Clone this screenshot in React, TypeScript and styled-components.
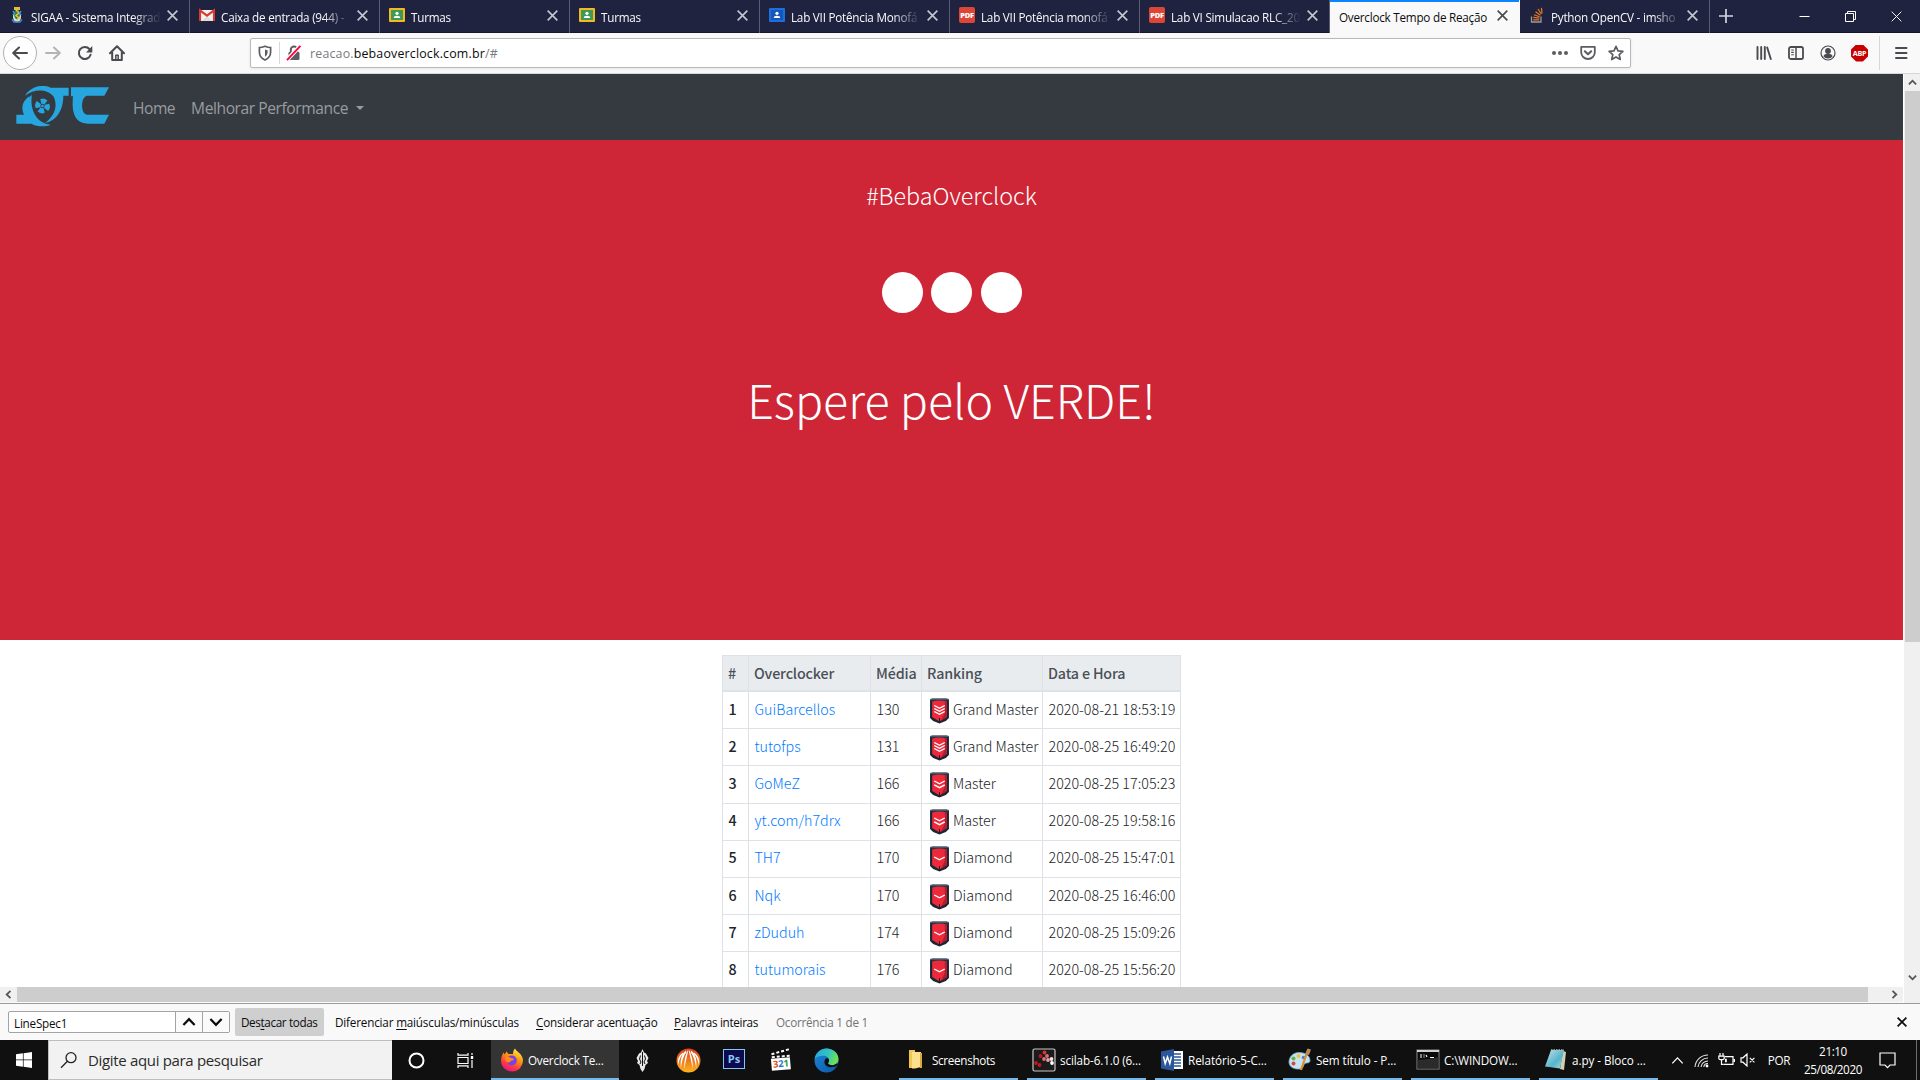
import React from "react";
import styled, { createGlobalStyle, css } from "styled-components";

const UI = '"Open Sans", "Noto Sans", sans-serif';
const PAGE = '"Noto Sans CJK SC", "Open Sans", sans-serif';

const Global = createGlobalStyle`
  *, *::before, *::after { box-sizing: border-box; }
  body { margin: 0; background: #fff; font-family: ${UI}; overflow: hidden; }
  svg { display: block; flex: none; }
`;

const Screen = styled.div`
  width: 1920px;
  height: 1080px;
  display: flex;
  flex-direction: column;
  overflow: hidden;
`;

const Label = styled.span<{ $size?: number; $ls?: number; $color?: string }>`
  font-size: ${p => p.$size ?? 11.7}px;
  letter-spacing: ${p => p.$ls ?? -0.22}px;
  color: ${p => p.$color ?? "inherit"};
  white-space: pre;
`;

/* ---------- tab strip ---------- */

const TabStrip = styled.div`
  height: 33px;
  flex: none;
  display: flex;
  background: #202340;
  box-shadow: inset 0 -1px 0 #14162b;
`;

const TabBox = styled.div<{ $active?: boolean }>`
  width: 190px;
  height: 33px;
  flex: none;
  display: flex;
  align-items: center;
  padding: 0 11px 3px 9px;
  gap: 6px;
  color: #f9f9fa;
  border-right: 1px solid #5b5d72;
  ${p => p.$active && css`
    background: #f9f9fa;
    color: #0c0c0d;
    border-right-color: #f9f9fa;
    box-shadow: inset 0 2px 0 #0a84ff;
  `}
`;

const TabTitle = styled.span<{ $fade?: boolean }>`
  flex: 1;
  min-width: 0;
  overflow: hidden;
  white-space: nowrap;
  font-size: 11.7px;
  letter-spacing: -0.23px;
  line-height: 18px;
  padding-top: 3px;
  ${p => p.$fade && css`mask-image: linear-gradient(to left, transparent 0, #000 28px);`}
`;

const TabTools = styled.div`
  flex: 1;
  display: flex;
  align-items: center;
  justify-content: space-between;
  padding: 0 18px 1px 9px;
  color: #f9f9fa;
`;

const WindowButtons = styled.div`
  display: flex;
  gap: 35px;
`;

/* ---------- toolbar ---------- */

const Toolbar = styled.div`
  height: 41px;
  flex: none;
  display: flex;
  align-items: center;
  background: #f9f9fa;
  border-bottom: 1px solid #d7d7db;
  color: #4a4a4f;
`;

const NavButtons = styled.div`
  width: 250px;
  flex: none;
  display: flex;
  align-items: center;
  gap: 16px;
  padding-left: 3px;
`;

const BackCircle = styled.div`
  width: 34px;
  height: 34px;
  margin-right: -8px;
  border: 1px solid #b1b1b3;
  border-radius: 50%;
  background: #fff;
  display: flex;
  align-items: center;
  justify-content: center;
`;

const UrlBar = styled.div`
  width: 1381px;
  height: 30px;
  flex: none;
  display: flex;
  align-items: center;
  padding: 0 6px;
  background: #fff;
  border: 1px solid #b8b8bb;
  border-radius: 2px;
  box-shadow: 0 1px 3px rgba(0, 0, 0, 0.08);
`;

const UrlDivider = styled.i`
  width: 1px;
  height: 22px;
  margin: 0 6px;
  background: #d7d7db;
`;

const UrlText = styled.span`
  flex: 1;
  margin-left: 8px;
  padding-top: 1px;
  font-size: 12.4px;
  letter-spacing: 0.18px;
  color: #7b7b80;
  b { font-weight: 400; color: #0c0c0d; }
`;

const UrlActions = styled.div`
  display: flex;
  gap: 12px;
`;

const ToolbarRight = styled.div`
  flex: 1;
  display: flex;
  align-items: center;
  justify-content: flex-end;
  gap: 16px;
  padding-right: 11px;
`;

const ToolDivider = styled.i`
  width: 1px;
  height: 34px;
  margin: 0 -3px 0 -5px;
  background: #d7d7db;
`;

/* ---------- page ---------- */

const Viewport = styled.div`
  height: 929px;
  flex: none;
  display: grid;
  grid-template-columns: 1903px 17px;
  grid-template-rows: 913px 16px;
  background: #f0f0f0;
`;

const Page = styled.main`
  overflow: hidden;
  background: #fff;
  font-family: ${PAGE};
`;

const Navbar = styled.nav`
  height: 66px;
  display: flex;
  align-items: center;
  padding: 0 16px;
  background: #343a40;
  color: #999c9f;
  font-family: ${UI};
`;

const Brand = styled.a`
  margin-right: 23px;
`;

const NavLink = styled.a<{ $ls: number }>`
  display: flex;
  align-items: center;
  gap: 8px;
  margin-right: 16px;
  padding-top: 2px;
  font-size: 15.6px;
  letter-spacing: ${p => p.$ls}px;
  white-space: nowrap;
`;

const Caret = styled.i`
  border: 4px solid transparent;
  border-top-color: currentColor;
  border-bottom: 0;
`;

const Hero = styled.section`
  height: 500px;
  display: flex;
  flex-direction: column;
  align-items: center;
  background: #ce2636;
  color: #fff;
  font-weight: 300;
`;

const HashTag = styled.p`
  margin: 38px 0 0;
  font-size: 23.3px;
  line-height: 34px;
`;

const Dots = styled.div`
  display: flex;
  gap: 8.500px;
  margin-top: 59.500px;
`;

const Dot = styled.i`
  width: 41px;
  height: 41px;
  border-radius: 50%;
  background: #fff;
`;

const Headline = styled.h1`
  margin: 52px 0 0;
  font-size: 46.600px;
  line-height: 68px;
  font-weight: 300;
`;

const Table = styled.div`
  width: 459px;
  margin: 15px 0 0 722px;
  border-left: 1px solid #dee2e6;
  border-top: 1px solid #dee2e6;
`;

const TableRow = styled.div<{ $head?: boolean }>`
  display: grid;
  grid-template-columns: 26px 122px 51px 121px 138px;
  height: ${p => (p.$head ? 36 : 37.2)}px;
  ${p => p.$head && css`background: #e9ecef; color: #495057;`}
`;

const Cell = styled.div<{ $head?: boolean; $bold?: boolean }>`
  display: flex;
  align-items: center;
  padding: ${p => (p.$head ? "0 0 1px 5px" : "0 0 4px 5.500px")};
  border-right: 1px solid #dee2e6;
  border-bottom: ${p => (p.$head ? 2 : 1)}px solid #dee2e6;
  font-size: 14.3px;
  font-weight: ${p => (p.$head || p.$bold ? 500 : 300)};
  letter-spacing: ${p => (p.$head ? -0.16 : 0)}px;
  color: ${p => (p.$head ? "#495057" : "#212529")};
  white-space: nowrap;
`;

const Player = styled.a`
  color: #007bff;
`;

const BadgeWrap = styled.span`
  margin: 5px 3px 0 1.500px;
`;

/* ---------- scrollbars ---------- */

const VScroll = styled.div`
  grid-row: 1 / 3;
  grid-column: 2;
  display: flex;
  flex-direction: column;
  align-items: center;
  justify-content: space-between;
  padding-bottom: 17px;
  background: #f0f0f0;
  border-left: 1px solid #fff;
`;

const VThumb = styled.div`
  width: 15px;
  height: 551px;
  margin-bottom: auto;
  background: #cdcdcd;
`;

const HScroll = styled.div`
  display: flex;
  align-items: center;
  height: 16px;
  background: #f0f0f0;
  border-bottom: 1px solid #fafafa;
`;

const HThumb = styled.div`
  width: 1851px;
  height: 15px;
  margin-right: 18px;
  background: #cdcdcd;
`;

const ArrowBox = styled.div`
  width: 17px;
  height: 17px;
  flex: none;
  display: flex;
  align-items: center;
  justify-content: center;
`;

/* ---------- find bar ---------- */

const FindBar = styled.div`
  height: 37px;
  flex: none;
  display: flex;
  align-items: center;
  padding: 0 13px 1px 8px;
  background: #f9f9fa;
  border-top: 1px solid #9c9c9e;
  color: #0c0c0d;
`;

const FindField = styled.div`
  display: flex;
  width: 222px;
  height: 22px;
  flex: none;
  border: 1px solid #a3a3a5;
  border-radius: 2px;
  background: #fff;
`;

const FindInput = styled.div`
  width: 166px;
  padding-left: 5px;
  line-height: 20px;
`;

const FindStep = styled.div`
  flex: 1;
  display: flex;
  align-items: center;
  justify-content: center;
  border-left: 1px solid #a3a3a5;
  background: #fbfbfb;
`;

const FindToggle = styled.div<{ $on?: boolean; $w: number }>`
  height: 28px;
  width: ${p => p.$w}px;
  flex: none;
  margin-left: 5px;
  padding-left: 6px;
  line-height: 26px;
  border-radius: 2px;
  background: ${p => (p.$on ? "#cfcfd0" : "transparent")};
  u { text-underline-offset: 2px; }
`;

const FindClose = styled.span`
  margin-left: auto;
`;

/* ---------- taskbar ---------- */

const Taskbar = styled.div`
  height: 40px;
  flex: none;
  display: flex;
  background: #101010;
  color: #fff;
`;

const TaskIcon = styled.div<{ $w: number }>`
  width: ${p => p.$w}px;
  flex: none;
  display: flex;
  align-items: center;
  justify-content: center;
`;

const SearchBox = styled.div`
  width: 344px;
  flex: none;
  display: flex;
  align-items: center;
  gap: 10px;
  padding-left: 11px;
  background: #f2f2f2;
  border: 1px solid #bdbdbd;
  border-right: 0;
  color: #2b2b2b;
`;

const TaskButton = styled.div<{ $active?: boolean }>`
  width: 128px;
  height: 40px;
  flex: none;
  display: flex;
  align-items: center;
  gap: 4px;
  padding: 0 0 1px 9px;
  background: ${p =>
    p.$active
      ? "linear-gradient(#76b9ed, #76b9ed) 0 100% / 128px 2px no-repeat, #343434"
      : "linear-gradient(#76b9ed, #76b9ed) 4px 100% / 119px 2px no-repeat"};
`;

const Pinned = styled.div`
  display: flex;
  width: 276px;
  flex: none;
`;

const Tray = styled.div`
  flex: 1;
  display: flex;
  align-items: center;
  padding-left: 5px;
`;

const TrayItem = styled.div<{ $w: number }>`
  width: ${p => p.$w}px;
  flex: none;
  display: flex;
  flex-direction: column;
  align-items: center;
`;

const Clock = styled(TrayItem)`
  line-height: 18px;
  padding-bottom: 1px;
`;

const ShowDesktop = styled.div`
  width: 4px;
  height: 40px;
  margin-left: auto;
  border-left: 1px solid #6e6e6e;
`;

/* ---------- icons ---------- */

const Cross = ({ s = 10, w = 1.6, c = "currentColor" }: { s?: number; w?: number; c?: string }) => (
  <svg width={s} height={s} viewBox="0 0 10 10" stroke={c} strokeWidth={w}><path d="M.6.6l8.8 8.8M9.4.6L.6 9.4" /></svg>
);

const Chevron = ({ r = 0, s = 9, w = 2, c = "#555" }: { r?: number; s?: number; w?: number; c?: string }) => (
  <svg width={s} height={s} viewBox="0 0 10 10" fill="none" stroke={c} strokeWidth={w}>
    <path d="M1 7.2L5 3l4 4.2" transform={`rotate(${r} 5 5)`} />
  </svg>
);

const Crest = () => (
  <svg width="16" height="18" viewBox="0 0 16 18">
    <path d="M4 8h8v3q0 4-4 5.500Q4 15 4 11z" fill="#d8dcd8" />
    <path d="M5 1h6v3H5z" fill="#e6b93a" /><path d="M6 4h4v3l1 2-1 3-2 2-2-2-1-3 1-2z" fill="#2f7a4c" />
    <path d="M7 4l3 3-3 2.500L10 12l-3 2" stroke="#f0c63c" strokeWidth="1.400" fill="none" />
    <path d="M4 5l1.500 2L4 9M12 5l-1.500 2L12 9" stroke="#3fa0e0" strokeWidth="1.400" fill="none" />
    <path d="M3 13.500l2 2.500h6l2-2.500" stroke="#3a8bd0" strokeWidth="1.400" fill="none" />
  </svg>
);

const Gmail = () => (
  <svg width="16" height="16" viewBox="0 0 16 16">
    <path d="M1 3h14v11H1z" fill="#f2f2f2" /><path d="M3 14l5-5 5 5z" fill="#ddd" />
    <path d="M1 14V3.4l7 5.2 7-5.2V14" fill="none" stroke="#d93a2e" strokeWidth="2.2" />
  </svg>
);

const Classroom = ({ frame, board }: { frame: string; board: string }) => (
  <svg width="16" height="16" viewBox="0 0 16 16">
    <rect y="1" width="16" height="14" rx="1" fill={frame} /><rect x="2" y="3" width="12" height="10" fill={board} />
    <circle cx="8" cy="6.3" r="1.6" fill="#fff" /><path d="M4.8 11q0-2.2 3.2-2.2T11.2 11z" fill="#fff" />
  </svg>
);

const PdfBox = styled.span`
  width: 16px;
  height: 16px;
  flex: none;
  border-radius: 2px;
  background: #dd4537;
  color: #fff;
  font: 800 7.5px/16px "Open Sans", sans-serif;
  letter-spacing: -0.3px;
  text-align: center;
`;

const StackOverflow = () => (
  <svg width="16" height="16" viewBox="0 0 16 16" fill="none">
    <path d="M2.5 9.5v5.5h9.5V9.5" stroke="#9b9b9b" strokeWidth="1.3" />
    <path d="M4.2 12.8h6.1M4.3 10.4l6 .7M5 7.8l5.6 1.9M6.6 4.8l4.8 3.5M9 2l3.3 5M12.4.8l.7 5.5" stroke="#e87922" strokeWidth="1.2" />
  </svg>
);

const Arrow = ({ c, flip }: { c: string; flip?: boolean }) => (
  <svg width="16" height="16" viewBox="0 0 16 16" fill="none" stroke={c} strokeWidth="2" strokeLinecap="round" strokeLinejoin="round">
    <path d={flip ? "M1 8h13.5M9 2.5L14.8 8 9 13.5" : "M15 8H1.5M7 2.5L1.2 8 7 13.5"} />
  </svg>
);

const Reload = () => (
  <svg width="16" height="16" viewBox="0 0 16 16" fill="none" stroke="#4a4a4f" strokeWidth="2">
    <path d="M13.6 9.8A6 6 0 1 1 12.4 4" strokeLinecap="round" /><path d="M15.3 1v6.4H9z" fill="#4a4a4f" stroke="none" />
  </svg>
);

const Home = () => (
  <svg width="16" height="16" viewBox="0 0 16 16" fill="none" stroke="#4a4a4f" strokeWidth="2" strokeLinejoin="round" strokeLinecap="round">
    <path d="M1 8.3L8 1.3l7 7M3.2 7.5V15h9.6V7.5" /><path d="M6.8 14.5v-4.2h2.4v4.2" strokeWidth="1.5" />
  </svg>
);

const Shield = () => (
  <svg width="16" height="16" viewBox="0 0 16 16" fill="none" stroke="#5c5c61" strokeWidth="1.7">
    <path d="M8 1.2q3 1.2 5.6 1.3v4.7Q13.4 12.8 8 15 2.6 12.8 2.4 7.2V2.5Q5 2.4 8 1.2z" />
    <path d="M8 4.4q1.6.7 2.6.8v2.3q0 2.6-2.6 4.2z" fill="#5c5c61" stroke="none" />
  </svg>
);

const BrokenLock = () => (
  <svg width="16" height="16" viewBox="0 0 16 16" fill="none">
    <rect x="2.5" y="7" width="11" height="8" rx="1.2" fill="#5c5c61" />
    <path d="M4.8 7.5V4.7a3.2 3.2 0 0 1 6.4 0v2.8" stroke="#5c5c61" strokeWidth="2" />
    <path d="M.8 15.2L14.2.8" stroke="#fff" strokeWidth="4" /><path d="M1 15.2L14.4.8" stroke="#ff0039" strokeWidth="1.9" />
  </svg>
);

const Dots3 = () => (
  <svg width="16" height="16" viewBox="0 0 16 16" fill="#5c5c61"><circle cx="2" cy="8" r="2" /><circle cx="8" cy="8" r="2" /><circle cx="14" cy="8" r="2" /></svg>
);

const Pocket = () => (
  <svg width="16" height="16" viewBox="0 0 16 16" fill="none" stroke="#5c5c61" strokeWidth="1.8" strokeLinejoin="round" strokeLinecap="round">
    <path d="M1.2 1.8h13.6v5.4a6.8 6.8 0 0 1-13.6 0z" /><path d="M4.8 6.2L8 9.3l3.2-3.1" strokeWidth="2" />
  </svg>
);

const Star = () => (
  <svg width="16" height="16" viewBox="0 0 16 16" fill="none" stroke="#5c5c61" strokeWidth="1.7" strokeLinejoin="round">
    <path d="M8 1.3l2 4.5 4.9.5-3.7 3.3 1.1 4.9L8 12l-4.3 2.5 1.1-4.9L1.1 6.3 6 5.8z" />
  </svg>
);

const Library = () => (
  <svg width="16" height="16" viewBox="0 0 16 16" fill="none" stroke="#4a4a4f" strokeWidth="1.9" strokeLinecap="round">
    <path d="M1.5 2v12M5.2 2v12M8.8 2v12M11.2 2.5L14.8 14" />
  </svg>
);

const Sidebar = () => (
  <svg width="16" height="16" viewBox="0 0 16 16" fill="none" stroke="#4a4a4f" strokeWidth="1.8">
    <rect x="1" y="2" width="14" height="12" rx="1.8" /><path d="M8 2v12" strokeWidth="1.5" /><path d="M3.2 5h2.6M3.2 7.4h2.6M3.2 9.8h2.6" strokeWidth="1.1" />
  </svg>
);

const Account = () => (
  <svg width="16" height="16" viewBox="0 0 16 16">
    <circle cx="8" cy="8" r="7" fill="none" stroke="#4a4a4f" strokeWidth="1.2" />
    <circle cx="8" cy="6" r="2.9" fill="#4a4a4f" /><path d="M3.3 11.3q1-2.3 3-2.3h3.4q2 0 3 2.3A6 6 0 0 1 8 13.6a6 6 0 0 1-4.7-2.3z" fill="#4a4a4f" />
  </svg>
);

const Abp = styled.span`
  width: 17px;
  height: 17px;
  margin: 0 0 0 -1px;
  background: #c80000;
  clip-path: polygon(30% 0, 70% 0, 100% 30%, 100% 70%, 70% 100%, 30% 100%, 0 70%, 0 30%);
  color: #fff;
  font: 700 7.2px/17px "Open Sans", sans-serif;
  letter-spacing: -0.2px;
  text-align: center;
`;

const Hamburger = () => (
  <svg width="16" height="16" viewBox="0 0 16 16" stroke="#4a4a4f" strokeWidth="2" strokeLinecap="round"><path d="M3 3h10.5M3 8h10.5M3 13h10.5" /></svg>
);

const Logo = () => (
  <svg width="94" height="42" viewBox="48 21 282 126">
    <g fill="#27a5df">
      <path d="M75 50C92 22 128 14 152 26H206V50H190C190 92 170 126 134 132C166 110 174 78 160 52C142 30 104 28 75 50Z" />
      <path d="M96 46C66 64 62 86 72 107H49V134H94C112 144 138 144 152 137C112 134 88 96 96 46Z" />
      <path d="M213 25H327L313 50H262C242 52 240 104 262 107H327L313 134H262C226 132 214 104 219 52H213Z" />
      {[14, 104, 194, 284].map(a => (
        <path key={a} d="M124 78L116 63Q126 55 138 61L131 78Z" transform={`rotate(${a} 127.5 81)`} />
      ))}
    </g>
    <circle cx="127.5" cy="81" r="6.5" fill="#343a40" /><circle cx="127.5" cy="81" r="4" fill="#27a5df" />
    <path d="M86 54C108 34 150 34 162 62" fill="none" stroke="#343a40" strokeWidth="3" />
  </svg>
);

const RankBadge = ({ n }: { n: number }) => (
  <svg width="21" height="26" viewBox="0 0 20 26" preserveAspectRatio="none">
    <path d="M1 1.5L3 .5h14l2 1V20l-3 3-6 2.5L4 23l-3-3z" fill="#1b2635" />
    <path d="M1.5 1.5h17" stroke="#46586d" strokeWidth="1.5" />
    <path d="M3 3.5q7-2 14 0v15.5l-7 4.5-7-4.5z" fill="#ed2a3b" />
    <path d="M15 3.2l2 .5v15.300l-5.500 3.500L15 15z" fill="#b31c2b" />
    <path d="M10 20v4.500" stroke="#2a1520" strokeWidth="1" />
    {Array.from({ length: n }, (_, i) => (
      <path key={i} d={`M5 ${(n === 3 ? 7.5 : n === 2 ? 9 : 11) + i * (n === 3 ? 3 : 3.8)}l5 2.800 5-2.800`} fill="none" stroke="#fff" strokeWidth="1.400" />
    ))}
  </svg>
);

const WinLogo = () => (
  <svg width="16" height="16" viewBox="0 0 16 16" fill="#fff"><path d="M0 2.3l6.900-1v6.300H0zM7.600 1.200L16 0v7.600H7.600zM0 8.300h6.900v6.400L0 13.700zM7.600 8.300H16V16l-8.400-1.200z" /></svg>
);

const Magnifier = () => (
  <svg width="18" height="18" viewBox="0 0 18 18" fill="none" stroke="#222" strokeWidth="1.3"><circle cx="11" cy="6.7" r="5" /><path d="M7.4 10.2L1 16.8" /></svg>
);

const Cortana = () => (
  <svg width="17" height="17" viewBox="0 0 17 17"><circle cx="8.5" cy="8.5" r="7" fill="none" stroke="#fff" strokeWidth="2" /></svg>
);

const TaskView = () => (
  <svg width="17" height="17" viewBox="0 0 17 17" fill="none" stroke="#fff" strokeWidth="1.2">
    <path d="M1 1v2.200h10V1M1 16v-2.200h10V16M1 5.500h10v6H1zM15 1v2M15 8v8" /><path d="M13.800 4h2.400v3h-2.400z" fill="#fff" stroke="none" />
  </svg>
);

const Firefox = () => (
  <svg width="24" height="24" viewBox="0 0 24 24">
    <defs><linearGradient id="ff" x1=".8" y1="0" x2=".3" y2="1"><stop offset="0" stopColor="#fff44f" /><stop offset=".4" stopColor="#ff980e" /><stop offset=".75" stopColor="#ff3647" /><stop offset="1" stopColor="#e31587" /></linearGradient></defs>
    <path d="M15 .5c1 3 7.500 5 8 11.500A11 11 0 0 1 1 13C1 9 2.500 6.500 3.500 4.500l1.200 2L6.500 3.500 8.500 6 13 6C13 4 13.500 2 15 .5z" fill="url(#ff)" />
    <circle cx="11.8" cy="12.5" r="5" fill="#7542e5" /><path d="M5 9q4-1 6 1 3 .2 3 1.200-.4 1.200-3 1.600-.5 2.200-4 1.500Q5 12 5 9z" fill="#ff8a16" />
  </svg>
);

const Skyrim = () => (
  <svg width="13" height="23" viewBox="0 0 13 23" fill="#e8e8e8">
    <path d="M6.500 0l1.500 3.500 2 1L12.500 9 11 12l1 2-2.500 2-1 4-2 3-2-3-1-4L1 14l1-2L.5 9 3 4.500l2-1z" />
    <path d="M6.500 3v14M4.500 6.500L3.500 10l1.500 3-1 2M8.500 6.500l1 3.500L8 13l1 2" stroke="#101010" strokeWidth="1" fill="none" />
  </svg>
);

const Shell = () => (
  <svg width="25" height="25" viewBox="0 0 25 25">
    <defs><linearGradient id="sh" x1="0" y1="0" x2="0" y2="1"><stop offset="0" stopColor="#d8451f" /><stop offset=".5" stopColor="#ee7a1e" /><stop offset="1" stopColor="#ffb520" /></linearGradient></defs>
    <circle cx="12.5" cy="12.5" r="12" fill="url(#sh)" />
    <g fill="#fff">
      <path d="M7 4.500Q.5 9 2.200 17Q3.500 9 7.500 5.500z" /><path d="M9.500 2.800Q3.500 8 4.800 20Q6.500 9 10.500 4z" /><path d="M12 2Q8 8 8.200 21Q10 12 12.200 3z" />
      <path d="M13 2Q17 8 16.800 21Q15 12 12.800 3z" /><path d="M15.500 2.800Q21.500 8 20.200 20Q18.500 9 14.500 4z" /><path d="M18 4.500Q24.500 9 22.800 17Q21.500 9 17.500 5.500z" />
    </g>
  </svg>
);

const PsBox = styled.span`
  width: 22px;
  height: 20px;
  margin-bottom: 3px;
  border: 1px solid #85c4f5;
  background: #0b0b4d;
  color: #8cc9f7;
  font: 700 11px/17px "Open Sans", sans-serif;
  text-align: center;
`;

const ClapperBox = styled.div`
  display: flex;
  flex-direction: column;
  align-items: center;
  width: 21px;
  transform: rotate(-5deg);
  margin-top: -1px;
`;

const ClapperSlate = styled.div`
  display: flex;
  width: 19px;
  height: 12px;
  background: #fff;
  font: 700 9.5px/12px "Open Sans", sans-serif;
  justify-content: center;
`;

const Clapper = () => (
  <ClapperBox>
    <svg width="20" height="9" viewBox="0 0 20 9" fill="none" stroke="#fff" strokeWidth="2" strokeDasharray="3 2"><path d="M1 4.500L19 1M1 7.500h18" /></svg>
    <ClapperSlate><Label $size={9.5} $color="#e04a1c">3</Label><Label $size={9.5} $color="#2574c9">2</Label><Label $size={9.5} $color="#2c9a3a">1</Label></ClapperSlate>
  </ClapperBox>
);

const Edge = () => (
  <svg width="25" height="25" viewBox="0 0 24 24">
    <defs>
      <linearGradient id="e1" x1="0" y1="0" x2="1" y2=".3"><stop offset="0" stopColor="#2aa3e0" /><stop offset=".6" stopColor="#33c4c0" /><stop offset="1" stopColor="#6be05a" /></linearGradient>
      <linearGradient id="e2" x1="0" y1="0" x2="1" y2="1"><stop offset="0" stopColor="#1b8ad8" /><stop offset="1" stopColor="#0c55a5" /></linearGradient>
    </defs>
    <circle cx="12" cy="12" r="11.5" fill="url(#e2)" />
    <path d="M.6 11C1.500 4.500 6.500.5 12 .5c7 0 11.500 5 11.500 10 0 4-3 6-6 6-2.500 0-4-1-4-1.800 0-.7 1-1 1-2.700 0-2.500-2.500-4.500-5.500-4.500C5 7.500 1.500 9 .6 11z" fill="url(#e1)" />
    <path d="M14.500 12c0 1.700-1 2-1 2.700 0 .8 1.500 1.800 4 1.800 2 0 3.500-.8 4.500-1.800l1 .8c-1 1.500-2 2.200-3 2.600-6 1.500-10-1-10-4.600 0-2 1-3.500 2.500-4 1.200.5 2 1.500 2 2.500z" fill="#101010" />
  </svg>
);

const Folder = () => (
  <svg width="24" height="24" viewBox="0 0 24 24"><path d="M5 2h6v18H5z" fill="#f0c552" /><path d="M8 4h9v15l-6 1.500H8z" fill="#fbdf8d" /><path d="M16 5h2v15h-2z" fill="#d9a93f" /></svg>
);

const Scilab = () => (
  <svg width="24" height="24" viewBox="0 0 24 24">
    <rect x="1" y="1" width="22" height="22" rx="1.5" fill="#1b1b1b" stroke="#c8c8c8" strokeWidth="1.2" />
    {([[12.5, 4.5, "#d63a28"], [8.5, 8, "#c31622"], [15, 8, "#d9707a"], [12, 11, "#d9707a"], [16, 12, "#e8a2a8"], [19.5, 11, "#f7dede"], [20, 15, "#fff"], [4, 15, "#c31622"], [7.5, 17, "#c31622"]] as [number, number, string][]).map(([x, y, c]) => (
      <circle key={`${x}-${y}`} cx={x} cy={y} r="1.9" fill={c} />
    ))}
  </svg>
);

const Word = () => (
  <svg width="24" height="24" viewBox="0 0 24 24">
    <path d="M12 3h11v18H12z" fill="#fff" /><path d="M14 6h7M14 9h7M14 12h7M14 15h7M14 18h7" stroke="#2b579a" strokeWidth="1.3" />
    <path d="M1 3.500L14 1v22L1 20.500z" fill="#2b579a" /><path d="M3.500 8.500l1.700 7L7.500 9l2.300 6.500 1.700-7" fill="none" stroke="#fff" strokeWidth="1.5" />
  </svg>
);

const Paint = () => (
  <svg width="24" height="24" viewBox="0 0 24 24">
    <path d="M11 4.500c6 0 11 3 11 8 0 3-3 2-5 3s-1 5-5 5.500C6 21.500 1 19 1 14S5 4.500 11 4.500z" fill="#c3e3f3" stroke="#6fa9c7" strokeWidth=".8" />
    <circle cx="5.5" cy="10.5" r="2" fill="#63b445" /><circle cx="10.5" cy="8" r="2" fill="#f1c232" /><circle cx="15.5" cy="9.5" r="1.8" fill="#4d7ed8" /><circle cx="5.5" cy="15.5" r="2" fill="#d8483a" />
    <path d="M18.500 6L13 22" stroke="#e38b33" strokeWidth="2.2" /><path d="M17 6l2.500-5.500 3.500 1-2 5.500z" fill="#b98a5b" />
  </svg>
);

const Cmd = () => (
  <svg width="24" height="24" viewBox="0 0 24 24">
    <rect x="1" y="2" width="22" height="19" fill="#0a0a0a" stroke="#8a8a8a" /><path d="M1 3h22" stroke="#d0d0d0" strokeWidth="2" />
    <path d="M4 7h2M4 9h2M8 6.500v1M8 8.500v1M10 7l1 2M14 9.500h4" stroke="#fff" strokeWidth="1.1" /><path d="M1.500 12q10 0 21-3v11.500h-21z" fill="#2b2b2b" />
  </svg>
);

const Notepad = () => (
  <svg width="24" height="24" viewBox="0 0 24 24">
    <defs><linearGradient id="np" x1="0" y1="0" x2="1" y2="1"><stop offset="0" stopColor="#bfe6f0" /><stop offset=".6" stopColor="#57b3c9" /><stop offset="1" stopColor="#a9dbe7" /></linearGradient></defs>
    <path d="M19 3l3 1-2 18-4-1z" fill="#d6cfae" /><path d="M7 2h13l-4 18.500L1 18.500z" fill="url(#np)" /><path d="M7 2h13" stroke="#b9b9b9" strokeWidth="1.6" strokeDasharray="1.5 1" />
  </svg>
);

const Wifi = () => (
  <svg width="15" height="15" viewBox="0 0 15 15" fill="none" stroke="#e8e8e8" strokeWidth="1.1">
    <path d="M1 14A13 13 0 0 1 14 2M4 14A10 10 0 0 1 14 5M7 14a7 7 0 0 1 7-6M9.800 14a4 4 0 0 1 4.200-3.500" /><circle cx="13" cy="13" r="1.4" fill="#fff" stroke="none" />
  </svg>
);

const Battery = () => (
  <svg width="17" height="14" viewBox="0 0 17 14" fill="none" stroke="#fff" strokeWidth="1.2">
    <path d="M7 3.600h8v7.800H5.500M16.400 6v3" /><path d="M2 0v3M5 0v3M.8 3.200h5.400v2q0 1.500-2.700 1.500T.8 5.200zM3.500 7v4.400h2" />
    <path d="M7 5.800h1.800v3.400H7z" fill="#fff" stroke="none" />
  </svg>
);

const Mute = () => (
  <svg width="16" height="14" viewBox="0 0 16 14" fill="none" stroke="#fff" strokeWidth="1.2">
    <path d="M1 4.800h2L7 1v12L3 9.200H1zM9.800 4.800l4.600 4.600M14.400 4.800L9.800 9.400" />
  </svg>
);

const Notifications = () => (
  <svg width="17" height="17" viewBox="0 0 17 17" fill="none" stroke="#fff" strokeWidth="1.2"><path d="M1 1h15v12h-5L8.500 15.700 6 13H1z" /></svg>
);

/* ---------- data ---------- */

const tabs: { title: string; icon?: React.ReactNode; active?: boolean }[] = [
  { title: "SIGAA - Sistema Integrad", icon: <Crest /> },
  { title: "Caixa de entrada (944) -", icon: <Gmail /> },
  { title: "Turmas", icon: <Classroom frame="#f4b922" board="#3d9a58" /> },
  { title: "Turmas", icon: <Classroom frame="#f4b922" board="#3d9a58" /> },
  { title: "Lab VII Potência Monofá", icon: <Classroom frame="#1f6ee0" board="#1557b8" /> },
  { title: "Lab VII Potência monofá", icon: <PdfBox>PDF</PdfBox> },
  { title: "Lab VI Simulacao RLC_20", icon: <PdfBox>PDF</PdfBox> },
  { title: "Overclock Tempo de Reação", active: true },
  { title: "Python OpenCV - imsho", icon: <StackOverflow /> },
];

const players: [string, number, string, number, string][] = [
  ["GuiBarcellos", 130, "Grand Master", 3, "2020-08-21 18:53:19"],
  ["tutofps", 131, "Grand Master", 3, "2020-08-25 16:49:20"],
  ["GoMeZ", 166, "Master", 2, "2020-08-25 17:05:23"],
  ["yt.com/h7drx", 166, "Master", 2, "2020-08-25 19:58:16"],
  ["TH7", 170, "Diamond", 1, "2020-08-25 15:47:01"],
  ["Nqk", 170, "Diamond", 1, "2020-08-25 16:46:00"],
  ["zDuduh", 174, "Diamond", 1, "2020-08-25 15:09:26"],
  ["tutumorais", 176, "Diamond", 1, "2020-08-25 15:56:20"],
];

const windows: [React.ReactNode, string, number][] = [
  [<Folder />, "Screenshots", -0.32],
  [<Scilab />, "scilab-6.1.0 (6...", -0.12],
  [<Word />, "Relatório-5-C...", -0.08],
  [<Paint />, "Sem título - P...", -0.06],
  [<Cmd />, "C:\\WINDOW...", -0.15],
  [<Notepad />, "a.py - Bloco ...", -0.06],
];

export default function App() {
  return (
    <Screen>
      <Global />
      <TabStrip>
        {tabs.map((t, i) => (
          <TabBox key={i} $active={t.active}>
            {t.icon}
            <TabTitle $fade={!t.active}>{t.title}</TabTitle>
            <Cross w={1.5} c={t.active ? "#4a4a4f" : "#c5c5cf"} s={11} />
          </TabBox>
        ))}
        <TabTools>
          <svg width="14" height="14" viewBox="0 0 14 14" stroke="#d5d5dd" strokeWidth="1.7"><path d="M7 0v14M0 7h14" /></svg>
          <WindowButtons>
            <svg width="11" height="11" viewBox="0 0 11 11" stroke="#fff"><path d="M.5 5.500h10" /></svg>
            <svg width="11" height="11" viewBox="0 0 11 11" fill="none" stroke="#fff"><path d="M.5 2.500h8v8h-8zM2.500 2.500v-2h8v8h-2" /></svg>
            <Cross s={11} w={0.9} />
          </WindowButtons>
        </TabTools>
      </TabStrip>

      <Toolbar>
        <NavButtons>
          <BackCircle><Arrow c="#4a4a4f" /></BackCircle>
          <Arrow c="#b4b4b7" flip />
          <Reload />
          <Home />
        </NavButtons>
        <UrlBar>
          <Shield />
          <UrlDivider />
          <BrokenLock />
          <UrlText>reacao.<b>bebaoverclock.com.br</b>/#</UrlText>
          <UrlActions><Dots3 /><Pocket /><Star /></UrlActions>
        </UrlBar>
        <ToolbarRight>
          <Library /><Sidebar /><Account /><Abp>ABP</Abp><ToolDivider /><Hamburger />
        </ToolbarRight>
      </Toolbar>

      <Viewport>
        <Page>
          <Navbar>
            <Brand><Logo /></Brand>
            <NavLink $ls={-0.5}>Home</NavLink>
            <NavLink $ls={-0.43}>Melhorar Performance <Caret /></NavLink>
          </Navbar>
          <Hero>
            <HashTag>#BebaOverclock</HashTag>
            <Dots><Dot /><Dot /><Dot /></Dots>
            <Headline>Espere pelo VERDE!</Headline>
          </Hero>
          <Table>
            <TableRow $head>
              {["#", "Overclocker", "Média", "Ranking", "Data e Hora"].map(h => <Cell key={h} $head>{h}</Cell>)}
            </TableRow>
            {players.map(([name, avg, rank, n, date], i) => (
              <TableRow key={name}>
                <Cell $bold>{i + 1}</Cell>
                <Cell><Player>{name}</Player></Cell>
                <Cell>{avg}</Cell>
                <Cell><BadgeWrap><RankBadge n={n} /></BadgeWrap>{rank}</Cell>
                <Cell>{date}</Cell>
              </TableRow>
            ))}
          </Table>
        </Page>
        <VScroll>
          <ArrowBox><Chevron /></ArrowBox>
          <VThumb />
          <ArrowBox><Chevron r={180} /></ArrowBox>
        </VScroll>
        <HScroll>
          <ArrowBox><Chevron r={-90} /></ArrowBox>
          <HThumb />
          <ArrowBox><Chevron r={90} /></ArrowBox>
        </HScroll>
      </Viewport>

      <FindBar>
        <FindField>
          <FindInput><Label>LineSpec1</Label></FindInput>
          <FindStep><Chevron s={14} w={1.6} c="#0c0c0d" /></FindStep>
          <FindStep><Chevron s={14} w={1.6} c="#0c0c0d" r={180} /></FindStep>
        </FindField>
        <FindToggle $on $w={89}><Label $ls={-0.36}>Des<u>t</u>acar todas</Label></FindToggle>
        <FindToggle $w={196}><Label $ls={-0.18}>Diferenciar <u>m</u>aiúsculas/minúsculas</Label></FindToggle>
        <FindToggle $w={133}><Label $ls={-0.2}><u>C</u>onsiderar acentuação</Label></FindToggle>
        <FindToggle $w={97}><Label $ls={-0.31}><u>P</u>alavras inteiras</Label></FindToggle>
        <FindToggle $w={120}><Label $ls={-0.25} $color="#737373">Ocorrência 1 de 1</Label></FindToggle>
        <FindClose><Cross s={10} w={1.7} /></FindClose>
      </FindBar>

      <Taskbar>
        <TaskIcon $w={48}><WinLogo /></TaskIcon>
        <SearchBox><Magnifier /><Label $size={15} $ls={-0.33}>Digite aqui para pesquisar</Label></SearchBox>
        <TaskIcon $w={48}><Cortana /></TaskIcon>
        <TaskIcon $w={51}><TaskView /></TaskIcon>
        <TaskButton $active><Firefox /><Label>Overclock Te...</Label></TaskButton>
        <Pinned>
          <TaskIcon $w={46}><Skyrim /></TaskIcon>
          <TaskIcon $w={46}><Shell /></TaskIcon>
          <TaskIcon $w={46}><PsBox>Ps</PsBox></TaskIcon>
          <TaskIcon $w={46}><Clapper /></TaskIcon>
          <TaskIcon $w={46}><Edge /></TaskIcon>
        </Pinned>
        {windows.map(([icon, title, ls]) => (
          <TaskButton key={title}>{icon}<Label $ls={ls}>{title}</Label></TaskButton>
        ))}
        <Tray>
          <TrayItem $w={18}><Chevron s={13} w={1} c="#fff" /></TrayItem>
          <TrayItem $w={30}><Wifi /></TrayItem>
          <TrayItem $w={20}><Battery /></TrayItem>
          <TrayItem $w={24}><Mute /></TrayItem>
          <TrayItem $w={38}><Label $ls={-0.2}>POR</Label></TrayItem>
          <Clock $w={70}><Label $ls={-0.4}>21:10</Label><Label $ls={-0.42}>25/08/2020</Label></Clock>
          <TrayItem $w={38}><Notifications /></TrayItem>
          <ShowDesktop />
        </Tray>
      </Taskbar>
    </Screen>
  );
}
